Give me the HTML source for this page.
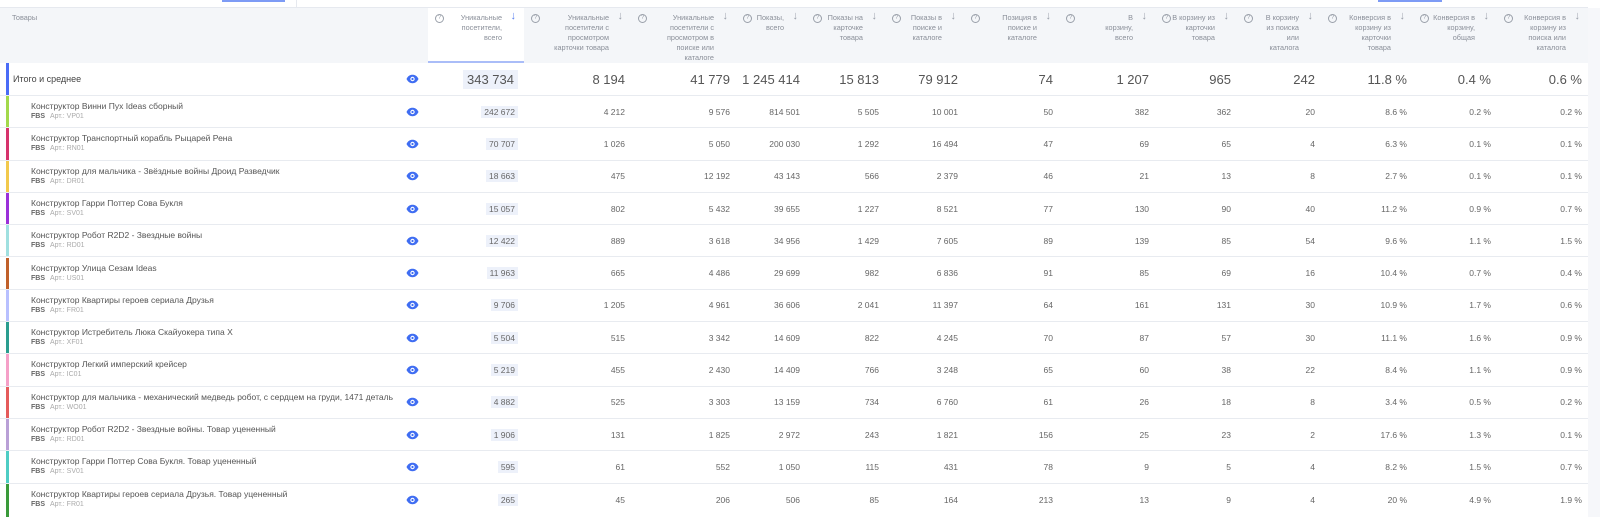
<!DOCTYPE html>
<html><head><meta charset="utf-8">
<style>
*{margin:0;padding:0;box-sizing:border-box}
body{width:1600px;height:517px;overflow:hidden;background:#fff;font-family:"Liberation Sans","DejaVu Sans",sans-serif;color:#555;position:relative}
.topline{position:absolute;left:0;top:7px;width:1588px;height:1px;background:#e6e9ef}
.seg{position:absolute;top:0;height:2px;background:#7d9bf5}
.vdiv{position:absolute;top:0;width:1px;height:7px;background:#e6e9ef}
.right{position:absolute;left:1588px;top:8px;width:12px;height:509px;background:#f6f7fa}
.row{position:absolute;left:0;width:1588px;display:grid;grid-template-columns:428px 96px 107px 105px 70px 79px 79px 95px 96px 82px 84px 92px 84px 91px;border-bottom:1px solid #e8ebf0;align-items:center}
.hdr{top:8px;height:55px;background:#f4f6f9;align-items:start;border-bottom:none}
.hdr>div{position:relative;height:55px;font-size:7.3px;line-height:10px;color:#8a8f99;text-align:right}
.hdr .t0{text-align:left;padding:5px 0 0 12px}
.hdr .q{position:absolute;left:7px;top:6px;width:9px;height:9px;border:1px solid #9aa0aa;border-radius:50%;font-size:6px;line-height:7px;text-align:center;color:#9aa0aa}
.hdr .a{position:absolute;right:8px;top:3px;color:#9aa0aa;font-size:11px}
.hdr .act .a{color:#5a80f0}
.hdr .tx{position:absolute;right:22px;top:5px}
.hdr .act{background:#fff}
.hdr .act:after{content:"";position:absolute;left:0;right:0;bottom:0;height:2px;background:#aabdf8}
.bar{position:absolute;left:6px;top:0;bottom:0;width:3px}
.c0{position:relative;height:100%}
.num{text-align:right;padding-right:6px;font-size:8.5px;color:#666}
.tot .num{font-size:13px;color:#555}
.hl span{background:#edf1fa;padding:1px 3px}
.tot .hl span{padding:2px 4px}
.name{position:absolute;left:31px;top:5px;font-size:8.5px;color:#555;white-space:nowrap}
.art{position:absolute;left:31px;top:17px;font-size:7px;color:#aaa}
.art b{color:#666;margin-right:5px}
.eye{position:absolute;left:406px;top:50%;margin-top:-5px;width:13px;height:10px}
.tt{position:absolute;left:13px;top:11px;font-size:9px;color:#444}
</style></head><body>
<svg width="0" height="0" style="position:absolute"><defs><symbol id="e" viewBox="0 0 13 10"><path d="M0.5 5C2 2 4 0.8 6.5 0.8S11 2 12.5 5C11 8 9 9.2 6.5 9.2S2 8 0.5 5Z" fill="#3f6df2"/><circle cx="6.5" cy="5" r="2.2" fill="#fff"/><circle cx="6.5" cy="5" r="1.1" fill="#3f6df2"/></symbol></defs></svg>
<div class="topline"></div>
<div class="seg" style="left:222px;width:63px"></div>
<div class="vdiv" style="left:296px"></div>
<div class="seg" style="left:1378px;width:64px"></div>
<div class="right"></div>

<div class="row hdr">
<div class="t0">Товары</div>
<div class="act"><span class="q">?</span><span class="tx" style="width:45px">Уникальные посетители, всего</span><span class="a">↓</span></div>
<div><span class="q">?</span><span class="tx" style="width:62px">Уникальные посетители с просмотром карточки товара</span><span class="a">↓</span></div>
<div><span class="q">?</span><span class="tx" style="width:50px">Уникальные посетители с просмотром в поиске или каталоге</span><span class="a">↓</span></div>
<div><span class="q">?</span><span class="tx" style="width:30px">Показы, всего</span><span class="a">↓</span></div>
<div><span class="q">?</span><span class="tx" style="width:38px">Показы на карточке товара</span><span class="a">↓</span></div>
<div><span class="q">?</span><span class="tx" style="width:36px">Показы в поиске и каталоге</span><span class="a">↓</span></div>
<div><span class="q">?</span><span class="tx" style="width:40px">Позиция в поиске и каталоге</span><span class="a">↓</span></div>
<div><span class="q">?</span><span class="tx" style="width:32px">В корзину, всего</span><span class="a">↓</span></div>
<div><span class="q">?</span><span class="tx" style="width:45px">В корзину из карточки товара</span><span class="a">↓</span></div>
<div><span class="q">?</span><span class="tx" style="width:35px">В корзину из поиска или каталога</span><span class="a">↓</span></div>
<div><span class="q">?</span><span class="tx" style="width:46px">Конверсия в корзину из карточки товара</span><span class="a">↓</span></div>
<div><span class="q">?</span><span class="tx" style="width:46px">Конверсия в корзину, общая</span><span class="a">↓</span></div>
<div><span class="q">?</span><span class="tx" style="width:46px">Конверсия в корзину из поиска или каталога</span><span class="a">↓</span></div>
</div>

<div class="row tot" style="top:63px;height:33px">
<div class="c0"><div class="bar" style="background:#4a6cf7"></div><span class="tt">Итого и среднее</span><svg class="eye"><use href="#e"/></svg></div>
<div class="num hl"><span>343 734</span></div><div class="num">8 194</div><div class="num">41 779</div><div class="num">1 245 414</div><div class="num">15 813</div><div class="num">79 912</div><div class="num">74</div><div class="num">1 207</div><div class="num">965</div><div class="num">242</div><div class="num">11.8 %</div><div class="num">0.4 %</div><div class="num">0.6 %</div>
</div>

<div class="row" style="top:96px;height:32.3px"><div class="c0"><div class="bar" style="background:#a3d94b"></div><span class="name">Конструктор Винни Пух Ideas сборный</span><span class="art"><b>FBS</b>Арт.: VP01</span><svg class="eye"><use href="#e"/></svg></div><div class="num hl"><span>242 672</span></div><div class="num">4 212</div><div class="num">9 576</div><div class="num">814 501</div><div class="num">5 505</div><div class="num">10 001</div><div class="num">50</div><div class="num">382</div><div class="num">362</div><div class="num">20</div><div class="num">8.6 %</div><div class="num">0.2 %</div><div class="num">0.2 %</div></div>

<div class="row" style="top:128.3px;height:32.3px"><div class="c0"><div class="bar" style="background:#d6336c"></div><span class="name">Конструктор Транспортный корабль Рыцарей Рена</span><span class="art"><b>FBS</b>Арт.: RN01</span><svg class="eye"><use href="#e"/></svg></div><div class="num hl"><span>70 707</span></div><div class="num">1 026</div><div class="num">5 050</div><div class="num">200 030</div><div class="num">1 292</div><div class="num">16 494</div><div class="num">47</div><div class="num">69</div><div class="num">65</div><div class="num">4</div><div class="num">6.3 %</div><div class="num">0.1 %</div><div class="num">0.1 %</div></div>

<div class="row" style="top:160.6px;height:32.3px"><div class="c0"><div class="bar" style="background:#f2c94c"></div><span class="name">Конструктор для мальчика - Звёздные войны Дроид Разведчик</span><span class="art"><b>FBS</b>Арт.: DR01</span><svg class="eye"><use href="#e"/></svg></div><div class="num hl"><span>18 663</span></div><div class="num">475</div><div class="num">12 192</div><div class="num">43 143</div><div class="num">566</div><div class="num">2 379</div><div class="num">46</div><div class="num">21</div><div class="num">13</div><div class="num">8</div><div class="num">2.7 %</div><div class="num">0.1 %</div><div class="num">0.1 %</div></div>

<div class="row" style="top:192.9px;height:32.3px"><div class="c0"><div class="bar" style="background:#9b30d9"></div><span class="name">Конструктор Гарри Поттер Сова Букля</span><span class="art"><b>FBS</b>Арт.: SV01</span><svg class="eye"><use href="#e"/></svg></div><div class="num hl"><span>15 057</span></div><div class="num">802</div><div class="num">5 432</div><div class="num">39 655</div><div class="num">1 227</div><div class="num">8 521</div><div class="num">77</div><div class="num">130</div><div class="num">90</div><div class="num">40</div><div class="num">11.2 %</div><div class="num">0.9 %</div><div class="num">0.7 %</div></div>

<div class="row" style="top:225.2px;height:32.3px"><div class="c0"><div class="bar" style="background:#a0e0e0"></div><span class="name">Конструктор Робот R2D2 - Звездные войны</span><span class="art"><b>FBS</b>Арт.: RD01</span><svg class="eye"><use href="#e"/></svg></div><div class="num hl"><span>12 422</span></div><div class="num">889</div><div class="num">3 618</div><div class="num">34 956</div><div class="num">1 429</div><div class="num">7 605</div><div class="num">89</div><div class="num">139</div><div class="num">85</div><div class="num">54</div><div class="num">9.6 %</div><div class="num">1.1 %</div><div class="num">1.5 %</div></div>

<div class="row" style="top:257.5px;height:32.3px"><div class="c0"><div class="bar" style="background:#c0602a"></div><span class="name">Конструктор Улица Сезам Ideas</span><span class="art"><b>FBS</b>Арт.: US01</span><svg class="eye"><use href="#e"/></svg></div><div class="num hl"><span>11 963</span></div><div class="num">665</div><div class="num">4 486</div><div class="num">29 699</div><div class="num">982</div><div class="num">6 836</div><div class="num">91</div><div class="num">85</div><div class="num">69</div><div class="num">16</div><div class="num">10.4 %</div><div class="num">0.7 %</div><div class="num">0.4 %</div></div>

<div class="row" style="top:289.8px;height:32.3px"><div class="c0"><div class="bar" style="background:#b8c0ff"></div><span class="name">Конструктор Квартиры героев сериала Друзья</span><span class="art"><b>FBS</b>Арт.: FR01</span><svg class="eye"><use href="#e"/></svg></div><div class="num hl"><span>9 706</span></div><div class="num">1 205</div><div class="num">4 961</div><div class="num">36 606</div><div class="num">2 041</div><div class="num">11 397</div><div class="num">64</div><div class="num">161</div><div class="num">131</div><div class="num">30</div><div class="num">10.9 %</div><div class="num">1.7 %</div><div class="num">0.6 %</div></div>

<div class="row" style="top:322.1px;height:32.3px"><div class="c0"><div class="bar" style="background:#2a9d8f"></div><span class="name">Конструктор Истребитель Люка Скайуокера типа Х</span><span class="art"><b>FBS</b>Арт.: XF01</span><svg class="eye"><use href="#e"/></svg></div><div class="num hl"><span>5 504</span></div><div class="num">515</div><div class="num">3 342</div><div class="num">14 609</div><div class="num">822</div><div class="num">4 245</div><div class="num">70</div><div class="num">87</div><div class="num">57</div><div class="num">30</div><div class="num">11.1 %</div><div class="num">1.6 %</div><div class="num">0.9 %</div></div>

<div class="row" style="top:354.4px;height:32.3px"><div class="c0"><div class="bar" style="background:#f5a0c8"></div><span class="name">Конструктор Легкий имперский крейсер</span><span class="art"><b>FBS</b>Арт.: IC01</span><svg class="eye"><use href="#e"/></svg></div><div class="num hl"><span>5 219</span></div><div class="num">455</div><div class="num">2 430</div><div class="num">14 409</div><div class="num">766</div><div class="num">3 248</div><div class="num">65</div><div class="num">60</div><div class="num">38</div><div class="num">22</div><div class="num">8.4 %</div><div class="num">1.1 %</div><div class="num">0.9 %</div></div>

<div class="row" style="top:386.7px;height:32.3px"><div class="c0"><div class="bar" style="background:#e55b5b"></div><span class="name">Конструктор для мальчика - механический медведь робот, с сердцем на груди, 1471 деталь</span><span class="art"><b>FBS</b>Арт.: WO01</span><svg class="eye"><use href="#e"/></svg></div><div class="num hl"><span>4 882</span></div><div class="num">525</div><div class="num">3 303</div><div class="num">13 159</div><div class="num">734</div><div class="num">6 760</div><div class="num">61</div><div class="num">26</div><div class="num">18</div><div class="num">8</div><div class="num">3.4 %</div><div class="num">0.5 %</div><div class="num">0.2 %</div></div>

<div class="row" style="top:419px;height:32.3px"><div class="c0"><div class="bar" style="background:#b9a0d6"></div><span class="name">Конструктор Робот R2D2 - Звездные войны. Товар уцененный</span><span class="art"><b>FBS</b>Арт.: RD01</span><svg class="eye"><use href="#e"/></svg></div><div class="num hl"><span>1 906</span></div><div class="num">131</div><div class="num">1 825</div><div class="num">2 972</div><div class="num">243</div><div class="num">1 821</div><div class="num">156</div><div class="num">25</div><div class="num">23</div><div class="num">2</div><div class="num">17.6 %</div><div class="num">1.3 %</div><div class="num">0.1 %</div></div>

<div class="row" style="top:451.3px;height:32.3px"><div class="c0"><div class="bar" style="background:#4ecdc4"></div><span class="name">Конструктор Гарри Поттер Сова Букля. Товар уцененный</span><span class="art"><b>FBS</b>Арт.: SV01</span><svg class="eye"><use href="#e"/></svg></div><div class="num hl"><span>595</span></div><div class="num">61</div><div class="num">552</div><div class="num">1 050</div><div class="num">115</div><div class="num">431</div><div class="num">78</div><div class="num">9</div><div class="num">5</div><div class="num">4</div><div class="num">8.2 %</div><div class="num">1.5 %</div><div class="num">0.7 %</div></div>

<div class="row" style="top:483.6px;height:33.4px;border-bottom:none"><div class="c0"><div class="bar" style="background:#3a9a3a"></div><span class="name">Конструктор Квартиры героев сериала Друзья. Товар уцененный</span><span class="art"><b>FBS</b>Арт.: FR01</span><svg class="eye"><use href="#e"/></svg></div><div class="num hl"><span>265</span></div><div class="num">45</div><div class="num">206</div><div class="num">506</div><div class="num">85</div><div class="num">164</div><div class="num">213</div><div class="num">13</div><div class="num">9</div><div class="num">4</div><div class="num">20 %</div><div class="num">4.9 %</div><div class="num">1.9 %</div></div>
</body></html>
